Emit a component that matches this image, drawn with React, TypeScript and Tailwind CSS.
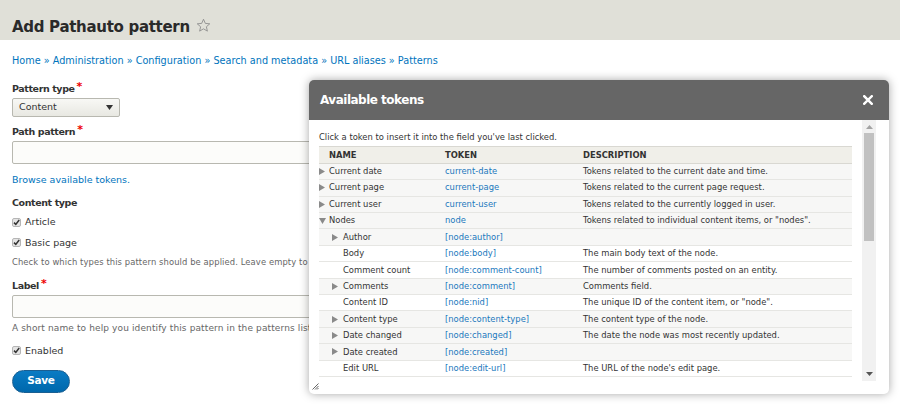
import React from 'react';

type Row = {
  name: string;
  token: string;
  desc: string;
  level: number;
  expander: 'right' | 'down' | null;
};

const rows: Row[] = [
  { name: 'Current date', token: 'current-date', desc: 'Tokens related to the current date and time.', level: 0, expander: 'right' },
  { name: 'Current page', token: 'current-page', desc: 'Tokens related to the current page request.', level: 0, expander: 'right' },
  { name: 'Current user', token: 'current-user', desc: 'Tokens related to the currently logged in user.', level: 0, expander: 'right' },
  { name: 'Nodes', token: 'node', desc: 'Tokens related to individual content items, or "nodes".', level: 0, expander: 'down' },
  { name: 'Author', token: '[node:author]', desc: '', level: 1, expander: 'right' },
  { name: 'Body', token: '[node:body]', desc: 'The main body text of the node.', level: 1, expander: null },
  { name: 'Comment count', token: '[node:comment-count]', desc: 'The number of comments posted on an entity.', level: 1, expander: null },
  { name: 'Comments', token: '[node:comment]', desc: 'Comments field.', level: 1, expander: 'right' },
  { name: 'Content ID', token: '[node:nid]', desc: 'The unique ID of the content item, or "node".', level: 1, expander: null },
  { name: 'Content type', token: '[node:content-type]', desc: 'The content type of the node.', level: 1, expander: 'right' },
  { name: 'Date changed', token: '[node:changed]', desc: 'The date the node was most recently updated.', level: 1, expander: 'right' },
  { name: 'Date created', token: '[node:created]', desc: '', level: 1, expander: 'right' },
  { name: 'Edit URL', token: '[node:edit-url]', desc: "The URL of the node's edit page.", level: 1, expander: null },
];

function Checkbox() {
  return (
    <svg width="9" height="9" viewBox="0 0 9 9" className="shrink-0">
      <rect x="0.5" y="0.5" width="8" height="8" rx="1.5" fill="#e4e4e4" stroke="#b5b5b5" />
      <path d="M2 4.6 L3.8 6.4 L7.2 2" fill="none" stroke="#333" strokeWidth="1.5" />
    </svg>
  );
}

function Required() {
  return <span className="text-[#e00] ml-[2px] text-[11px] leading-none relative top-[-2px]">*</span>;
}

function Expander({ dir }: { dir: 'right' | 'down' }) {
  return dir === 'right' ? (
    <svg width="6" height="7" viewBox="0 0 6 7" className="shrink-0">
      <path d="M0 0 L6 3.5 L0 7 Z" fill="#8a8a8a" />
    </svg>
  ) : (
    <svg width="7" height="6" viewBox="0 0 7 6" className="shrink-0">
      <path d="M0 0 L7 0 L3.5 6 Z" fill="#8a8a8a" />
    </svg>
  );
}

function TokenDialog() {
  return (
    <div className="absolute left-[309px] top-[80px] w-[580px] h-[314px] bg-white rounded-[5px] shadow-[0_0_10px_rgba(0,0,0,0.35)] flex flex-col overflow-hidden">
      <div className="h-[40px] bg-[#666666] flex items-center justify-between pl-[11px] pr-[16px] shrink-0">
        <span className="text-white font-bold text-[12px] tracking-[-0.5px]">Available tokens</span>
        <svg width="10" height="10" viewBox="0 0 10 10">
          <path d="M1.2 1.2 L8.8 8.8 M8.8 1.2 L1.2 8.8" stroke="#fff" strokeWidth="2.4" strokeLinecap="square" />
        </svg>
      </div>
      <div className="flex h-[261px] pr-[13px]">
        <div className="flex-1 overflow-hidden pl-[10px] pr-[10px] pt-[11px]">
          <p className="text-[8.4px] leading-[12px] text-[#333] mb-[3px]">
            Click a token to insert it into the field you've last clicked.
          </p>
          <table className="w-full table-fixed border-collapse text-[8.4px] text-[#333]">
            <colgroup>
              <col className="w-[116px]" />
              <col className="w-[138px]" />
              <col />
            </colgroup>
            <thead>
              <tr className="h-[16.7px] bg-[#f0efe9] border-t border-b border-[#d9d8d2]">
                <th className="text-left font-bold pl-[10px] uppercase">Name</th>
                <th className="text-left font-bold pl-[10px] uppercase">Token</th>
                <th className="text-left font-bold pl-[10px] uppercase">Description</th>
              </tr>
            </thead>
            <tbody>
              {rows.map((r) => (
                <tr
                  key={r.token}
                  className={`h-[16.42px] border-b border-[#e6e6e3] ${r.expander ? 'bg-[#f7f7f6]' : 'bg-white'}`}
                >
                  <td className="p-0 whitespace-nowrap">
                    <div className={`flex items-center ${r.level === 1 ? 'pl-[13px]' : 'pl-0'}`}>
                      <span className="w-[10px] flex items-center">
                        {r.expander && <Expander dir={r.expander} />}
                      </span>
                      <span className={r.level === 1 ? 'ml-[1px]' : 'ml-0'}>{r.name}</span>
                    </div>
                  </td>
                  <td className="pl-[10px] text-[#1a78bd] whitespace-nowrap">{r.token}</td>
                  <td className="pl-[10px] whitespace-nowrap">{r.desc}</td>
                </tr>
              ))}
            </tbody>
          </table>
        </div>
        <div className="w-[14px] bg-[#f1f1f1] flex flex-col items-center">
          <svg width="7" height="4" viewBox="0 0 7 4" className="mt-[5px]">
            <path d="M0 4 L3.5 0 L7 4 Z" fill="#a3a3a3" />
          </svg>
          <div className="w-[10px] h-[108px] bg-[#c1c1c1] mt-[4px]" />
          <div className="flex-1" />
          <svg width="7" height="4" viewBox="0 0 7 4" className="mb-[5px]">
            <path d="M0 0 L3.5 4 L7 0 Z" fill="#555" />
          </svg>
        </div>
      </div>
      <div className="flex-1 relative">
        <svg width="7" height="7" viewBox="0 0 7 7" className="absolute left-[3px] top-[2px]">
          <path d="M6.5 0.5 L0.5 6.5 M6.5 3 L3 6.5 M6.5 5 L5 6.5" stroke="#666" strokeWidth="1" />
        </svg>
      </div>
    </div>
  );
}

export default function App() {
  return (
    <div className="relative w-[900px] h-[407px] overflow-hidden bg-white font-['DejaVu_Sans',sans-serif] text-[#333]">
      <div className="h-[40px] bg-[#e0e0d8] flex items-center pl-[12px] pt-[14px]">
        <h1 className="text-[15px] font-bold text-[#2a2a2a] tracking-[-0.3px] leading-none">Add Pathauto pattern</h1>
        <svg width="15" height="15" viewBox="0 0 24 24" className="ml-[6px] mb-[3px]">
          <path
            d="M12 2 L14.9 8.6 L22 9.3 L16.6 14 L18.2 21 L12 17.3 L5.8 21 L7.4 14 L2 9.3 L9.1 8.6 Z"
            fill="none"
            stroke="#8c8c8c"
            strokeWidth="1.4"
            strokeLinejoin="round"
          />
        </svg>
      </div>

      <div className="px-[12px]">
        <nav className="mt-[14px] text-[9.7px] leading-[14px] text-[#0074bd]">
          Home » Administration » Configuration » Search and metadata » URL aliases » Patterns
        </nav>

        <div className="mt-[14px] text-[9.5px] leading-[14px] font-bold tracking-[-0.4px]">
          Pattern type<Required />
        </div>
        <div className="mt-[2px] w-[108px] h-[19px] rounded-[2px] border border-[#b8b8b0] bg-gradient-to-b from-[#f8f8f5] to-[#e8e8e2] flex items-center justify-between pl-[6px] pr-[6px] text-[9.5px]">
          <span>Content</span>
          <svg width="7" height="5" viewBox="0 0 7 5">
            <path d="M0 0 L7 0 L3.5 5 Z" fill="#333" />
          </svg>
        </div>

        <div className="mt-[8px] text-[9.5px] leading-[14px] font-bold tracking-[-0.4px]">
          Path pattern<Required />
        </div>
        <div className="mt-[2px] h-[23px] w-[870px] rounded-[2px] border border-[#b8b8b0] bg-[#fcfcfa]" />

        <div className="mt-[8.5px] text-[9.5px] leading-[14px] text-[#0074bd]">Browse available tokens.</div>

        <div className="mt-[9px] text-[9.5px] leading-[14px] font-bold tracking-[-0.4px]">Content type</div>
        <div className="mt-[5.5px] flex items-center gap-[4px] text-[9.5px] leading-[14px]">
          <Checkbox />
          <span>Article</span>
        </div>
        <div className="mt-[6.5px] flex items-center gap-[4px] text-[9.5px] leading-[14px]">
          <Checkbox />
          <span>Basic page</span>
        </div>
        <p className="mt-[6.5px] text-[8.4px] leading-[12px] tracking-[0.1px] text-[#666] whitespace-nowrap">
          Check to which types this pattern should be applied. Leave empty to allow any.
        </p>

        <div className="mt-[11px] text-[9.5px] leading-[14px] font-bold tracking-[-0.4px]">
          Label<Required />
        </div>
        <div className="mt-[2px] h-[23px] w-[870px] rounded-[2px] border border-[#b8b8b0] bg-[#fcfcfa]" />
        <p className="mt-[3.5px] text-[9px] leading-[12px] tracking-[0.12px] text-[#666] whitespace-nowrap">
          A short name to help you identify this pattern in the patterns list.
        </p>

        <div className="mt-[10px] flex items-center gap-[4px] text-[9.5px] leading-[14px]">
          <Checkbox />
          <span>Enabled</span>
        </div>

        <button className="mt-[12px] w-[58px] h-[23px] rounded-full bg-gradient-to-b from-[#0a7bc4] to-[#0068ac] border border-[#1a5f92] text-white font-bold text-[10.5px] tracking-[-0.3px] flex items-center justify-center">
          Save
        </button>
      </div>

      <TokenDialog />
    </div>
  );
}
